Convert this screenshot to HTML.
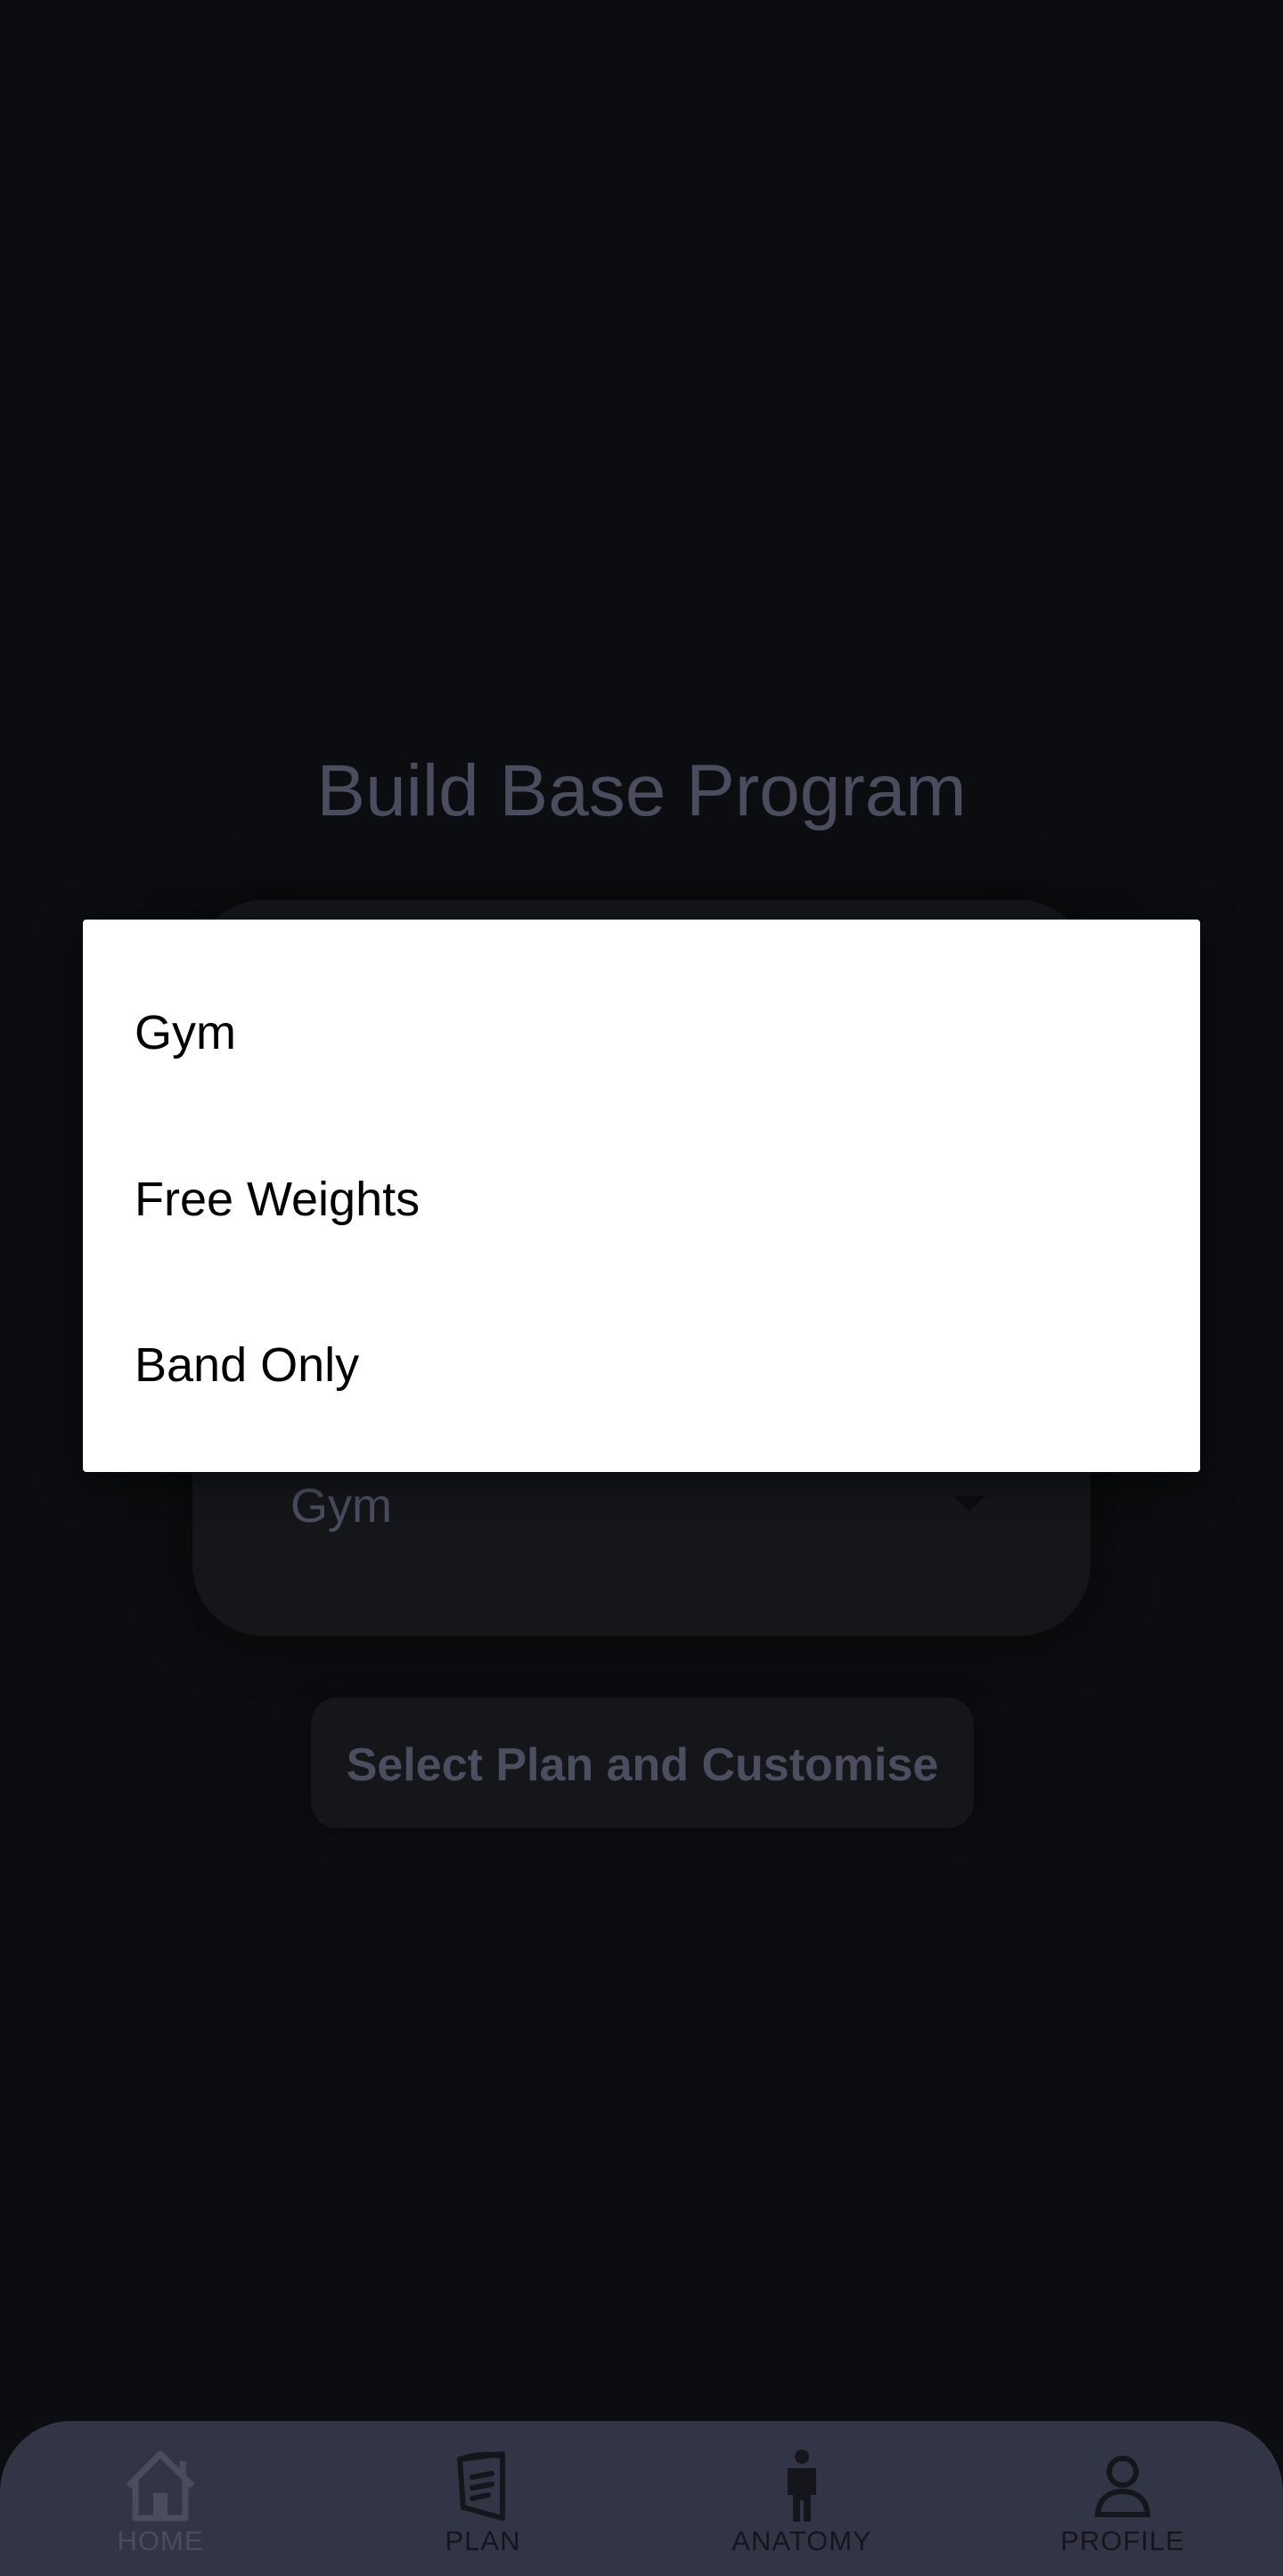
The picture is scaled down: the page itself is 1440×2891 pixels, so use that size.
<!DOCTYPE html>
<html><head><meta charset="utf-8"><style>
html,body{margin:0;padding:0;}
body{width:1440px;height:2891px;background:#0c0d10;position:relative;overflow:hidden;font-family:"Liberation Sans",sans-serif;}
.abs{position:absolute;}
.title{left:0;width:1440px;top:838px;text-align:center;font-size:82px;color:#4a4d5e;line-height:100px;}
.card{left:216px;top:1010px;width:1008px;height:826px;background:#15161a;border-radius:80px;box-shadow:0 0 60px rgba(0,0,0,0.5);}
.cgym{left:326px;top:1658px;font-size:54px;color:#4a4d5e;line-height:64px;}
.arrow{left:1070px;top:1679px;width:0;height:0;border-left:18px solid transparent;border-right:18px solid transparent;border-top:18px solid #0c0d10;}
.btn{left:349px;top:1905px;width:744px;height:147px;background:#15161a;border-radius:30px;text-align:center;line-height:153px;font-size:52px;font-weight:bold;color:#4b4e5e;box-shadow:0 0 30px rgba(0,0,0,0.4);}
.dlg{left:93px;top:1032px;width:1254px;height:620px;background:#fff;border-radius:4px;box-shadow:0 10px 40px rgba(0,0,0,0.6);}
.item{left:151px;font-size:54px;color:#000;line-height:64px;}
.nav{left:0;top:2717px;width:1440px;height:174px;background:#323545;border-radius:80px 80px 0 0;}
.lbl{top:2834px;font-size:31px;line-height:36px;text-align:center;width:240px;letter-spacing:1px;}
</style></head><body>
<div class="abs title">Build Base Program</div>
<div class="abs card"></div>
<div class="abs cgym">Gym</div>
<div class="abs arrow"></div>
<div class="abs btn">Select Plan and Customise</div>
<div class="abs dlg"></div>
<div class="abs item" style="top:1127px">Gym</div>
<div class="abs item" style="top:1314px">Free Weights</div>
<div class="abs item" style="top:1500px">Band Only</div>
<div class="abs nav"></div>
<svg class="abs" style="left:0;top:2740px" width="1440" height="100" viewBox="0 2740 1440 100">
 <g fill="none" stroke="#4a4d5e" stroke-width="7" stroke-linejoin="round">
  <path d="M144 2790 L180 2754 L216 2790"/>
  <path d="M152 2783 V2826 H208 V2783"/>
  <path d="M205 2762 V2778"/>
 </g>
 <rect x="172" y="2798" width="16" height="28" fill="#4a4d5e"/>
 <g fill="none" stroke="#15161b" stroke-width="6" stroke-linejoin="round" stroke-linecap="round">
  <path d="M516 2760 L564 2754 V2826 L520 2814 Z"/>
  <path d="M516 2760 Q540 2752 560 2756"/>
  <path d="M530 2780 L552 2776 M530 2792 L552 2788 M530 2804 L548 2800"/>
 </g>
 <g fill="#15161b">
  <circle cx="900" cy="2757" r="8"/>
  <path d="M884 2770 H916 V2800 H910 V2830 H902 V2806 H898 V2830 H890 V2800 H884 Z"/>
 </g>
 <g fill="none" stroke="#15161b" stroke-width="6">
  <circle cx="1260" cy="2774" r="15"/>
  <path d="M1232 2822 Q1234 2797 1260 2796 Q1286 2797 1288 2822 Z"/>
 </g>
</svg>
<div class="abs lbl" style="left:60px;color:#4a4d5e">HOME</div>
<div class="abs lbl" style="left:422px;color:#15161b">PLAN</div>
<div class="abs lbl" style="left:780px;color:#15161b">ANATOMY</div>
<div class="abs lbl" style="left:1140px;color:#15161b">PROFILE</div>
</body></html>
